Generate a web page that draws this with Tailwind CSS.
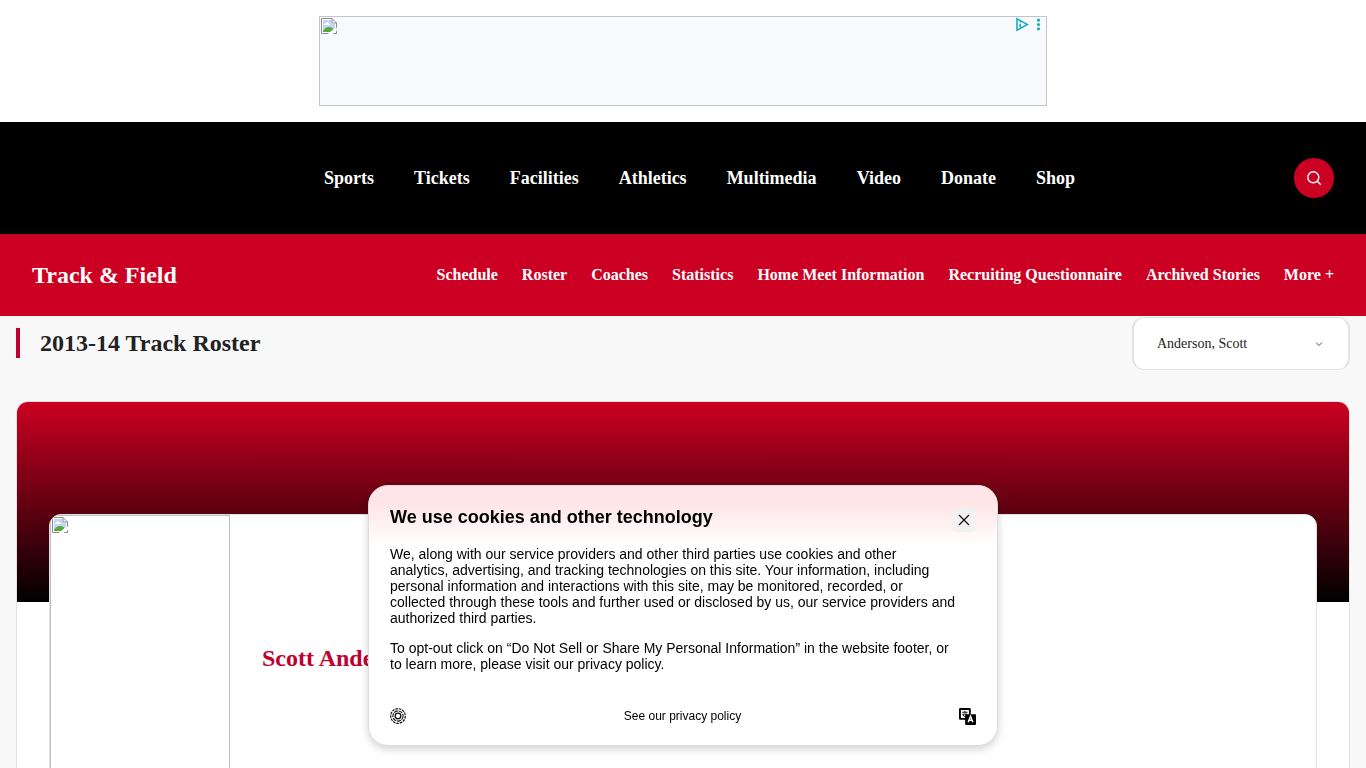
<!DOCTYPE html>
<html lang="en">
<head>
<meta charset="utf-8">
<meta name="viewport" content="width=device-width, initial-scale=1">
<title>2013-14 Track Roster - Scott Anderson</title>
<script src="https://cdn.jsdelivr.net/npm/@tailwindcss/browser@4"></script>
</head>
<body class="h-screen overflow-hidden bg-[#f8f8f8] font-['Liberation_Serif',serif] text-[#222]">
<svg class="hidden">
  <symbol id="missing" viewBox="0 0 16 16">
    <path d="M.5.5h10.500l4.500 4.500v10.500H.5z" fill="#fff"/>
    <path d="M2 2h8.500v4h3.500v4L9 14H2z" fill="#c3d5f5"/>
    <path d="M3 7q0-1.500 1.500-1.500Q5 4 6.500 4.200 8 4.500 8 6q1.200 0 1.200 1H3z" fill="#fff"/>
    <path d="M2 14v-1q2.500-4 6-4 3 0 4.500 2L9 14z" fill="#55a83a"/>
    <path d="M.5 15.500V.5H11L15.500 5v5M11 .5V5h4.500M.5 15.500h7M12 15.500h3.500V13" fill="none" stroke="#8c8c8c"/>
    <path d="M8 16l3.500-3.700L16 9.500v2.700L11.500 16z" fill="#fff"/>
  </symbol>
</svg>
<aside class="bg-white py-4" aria-label="Advertisement">
  <div class="mx-auto flex h-[90px] max-w-[728px] items-start justify-between border border-[#c4c4c4] bg-[#f8fafd]">
    <svg class="m-px size-4" role="img" aria-label="Missing image"><use href="#missing"/></svg>
    <div class="flex items-center gap-1.5 pr-1">
      <svg class="h-[15px] w-[15px]" viewBox="0 0 15 15" fill="none" stroke="#19abc1" stroke-width="1.600"><path d="M3 1.800v11.400L13.500 7.500zM6.200 6.700v3.500M6.200 4.500v1"/></svg>
      <svg class="h-[15px] w-[7px]" viewBox="0 0 7 15" fill="#19abc1"><circle cx="3.500" cy="3.200" r="1.600"/><circle cx="3.500" cy="7.500" r="1.600"/><circle cx="3.500" cy="11.800" r="1.600"/></svg>
    </div>
  </div>
</aside>
<header>
  <div class="flex h-28 items-center justify-between bg-black px-8 text-white">
    <a href="#" aria-label="Home" class="h-12 w-[73px]"></a>
    <nav class="flex gap-10 text-lg font-bold" aria-label="Main">
      <a href="#">Sports</a><a href="#">Tickets</a><a href="#">Facilities</a><a href="#">Athletics</a><a href="#">Multimedia</a><a href="#">Video</a><a href="#">Donate</a><a href="#">Shop</a>
    </nav>
    <button class="flex size-10 items-center justify-center rounded-full bg-[#cc0022]" aria-label="Search">
      <svg class="size-4" viewBox="0 0 16 16" fill="none" stroke="#fff" stroke-width="1.400" stroke-linecap="round"><circle cx="7.300" cy="7.300" r="5.500"/><path d="M11.300 11.300L14.300 14.300"/></svg>
    </button>
  </div>
  <div class="flex h-[82px] items-center justify-between bg-[#cc0022] px-8 font-bold text-white">
    <a href="#" class="text-2xl">Track &amp; Field</a>
    <nav class="flex gap-6 text-base" aria-label="Track and Field">
      <a href="#">Schedule</a><a href="#">Roster</a><a href="#">Coaches</a><a href="#">Statistics</a><a href="#">Home Meet Information</a><a href="#">Recruiting Questionnaire</a><a href="#">Archived Stories</a><button>More +</button>
    </nav>
  </div>
</header>
<main class="px-4">
  <div class="flex items-start justify-between pt-px">
    <h1 class="mt-[11px] border-l-4 border-[#c00030] pl-5 text-2xl leading-[30px] font-bold">2013-14 Track Roster</h1>
    <div class="grid w-[218px] items-center">
      <select aria-label="Player" class="col-start-1 row-start-1 h-[53px] w-full appearance-none rounded-xl border-2 border-y border-[#e2e2e2] bg-white pl-[23px] text-sm">
        <option>Anderson, Scott</option>
      </select>
      <svg class="pointer-events-none col-start-1 row-start-1 mr-[26px] size-2.5 justify-self-end" viewBox="0 0 10 10" fill="none" stroke="#555"><path d="M2 3.500L5 6.500 8 3.500"/></svg>
    </div>
  </div>
  <section class="mt-[31px] overflow-hidden rounded-xl border border-[#e2e2e2] bg-white">
    <div class="h-[200px] bg-linear-to-b/srgb from-[#cc0022] to-black"></div>
    <div class="relative mx-8 -mt-22 flex items-center gap-8 overflow-hidden rounded-xl border border-[#e2e2e2] bg-white">
      <div class="h-[286px] w-[180px] border border-[#bdbdbd]">
        <svg class="m-px size-4" role="img" aria-label="Scott Anderson"><use href="#missing"/></svg>
      </div>
      <h2 class="text-2xl font-bold text-[#c00030]">Scott Anderson</h2>
    </div>
  </section>
</main>
<div role="dialog" aria-labelledby="cookie-title" class="fixed inset-x-0 bottom-[22px] mx-auto w-[630px] max-w-full rounded-[20px] border border-[#ddd] bg-white bg-linear-to-b/srgb from-[#ffe5e8] from-[18px] to-white to-[60px] px-[21px] pt-5 pb-5 font-['Liberation_Sans',sans-serif] text-black shadow-[0_3px_8px_rgba(0,0,0,0.18)]">
  <div class="flex items-start justify-between">
    <h2 id="cookie-title" class="text-lg leading-[22px] font-bold">We use cookies and other technology</h2>
    <button aria-label="Close" class="mt-0.5 flex size-6 items-center justify-center rounded bg-[#f3f0f1]">
      <svg class="size-3" viewBox="0 0 12 12" fill="none" stroke="#111" stroke-width="1.300"><path d="M1 1l10 10M11 1L1 11"/></svg>
    </button>
  </div>
  <div class="mt-3.5 space-y-3.5 pr-5 text-sm leading-4">
    <p>We, along with our service providers and other third parties use cookies and other analytics, advertising, and tracking technologies on this site. Your information, including personal information and interactions with this site, may be monitored, recorded, or collected through these tools and further used or disclosed by us, our service providers and authorized third parties.</p>
    <p>To opt-out click on “Do Not Sell or Share My Personal Information” in the website footer, or to learn more, please visit our privacy policy.</p>
  </div>
  <div class="mt-[35px] flex items-center justify-between">
    <svg class="mb-px size-4" viewBox="0 0 16 16" fill="none" stroke="#111"><circle cx="8" cy="8" r="7.300" stroke-width="1.200" stroke-dasharray="2.600 .9"/><circle cx="8" cy="8" r="5.100" stroke-width="1.100" stroke-dasharray="4 .8"/><circle cx="8" cy="8" r="2.800" stroke-width="1.300"/></svg>
    <a href="#" class="text-xs leading-[18px]">See our privacy policy</a>
    <button aria-label="Language">
      <svg class="size-[17px]" viewBox="0 0 18 18"><rect x="1" y="1" width="10.500" height="10.500" rx=".5" fill="#fff" stroke="#000" stroke-width="2"/><path d="M3.500 4.500h5.500M6.200 3v1.500M4.200 6.500q0 2.500 2 2.500t2-2.500M4 6.500h4.500" fill="none" stroke="#000"/><rect x="6.500" y="6.500" width="11.500" height="11.500" rx="1" fill="#000"/><path d="M9.700 15l2.500-6.300L14.700 15M10.600 13h3.200" fill="none" stroke="#fff" stroke-width="1.500"/></svg>
    </button>
  </div>
</div>
</body>
</html>
